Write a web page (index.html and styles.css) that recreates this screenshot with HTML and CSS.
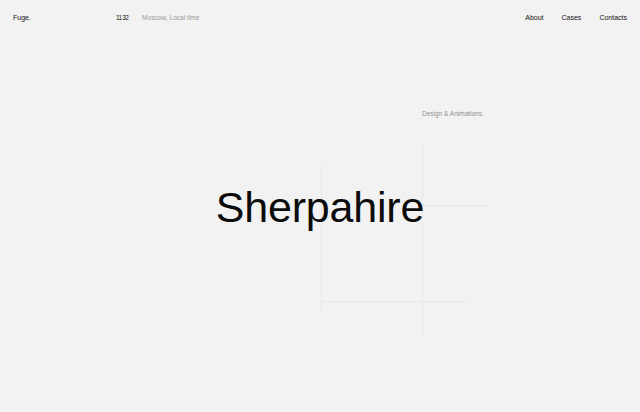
FILE: index.html
```html
<!DOCTYPE html>
<html lang="en">
<head>
<meta charset="utf-8">
<title>Fuge.</title>
<link rel="stylesheet" href="styles.css">
</head>
<body>
<div class="page">
  <header class="header">
    <div class="header-left">
      <span class="brand">Fuge.</span>
      <span class="clock">11 32</span>
      <span class="muted">Moscow, Local time</span>
    </div>
    <nav class="nav">
      <a href="#" class="nav-link">About</a>
      <a href="#" class="nav-link">Cases</a>
      <a href="#" class="nav-link">Contacts</a>
    </nav>
  </header>
  <main class="hero">
    <span class="deco deco-v1"></span>
    <span class="deco deco-v2"></span>
    <span class="deco deco-h1"></span>
    <span class="deco deco-h2"></span>
    <p class="tagline">Design &amp; Animations.</p>
    <h1 class="title">Sherpahire</h1>
  </main>
</div>
</body>
</html>
```

FILE: styles.css
```css
* { box-sizing: border-box; }
html, body {
  margin: 0;
  padding: 0;
  background: #f2f2f2;
  font-family: "Liberation Sans", Arial, sans-serif;
  color: #111;
}
.page {
  position: relative;
  height: 412px;
  overflow: hidden;
}
.header {
  display: flex;
  justify-content: space-between;
  align-items: baseline;
  padding: 14px 13px 0;
  font-size: 7px;
  line-height: 8px;
}
.header-left {
  display: flex;
  align-items: baseline;
}
.brand {
  width: 103px;
}
.clock {
  width: 26px;
  font-size: 6.4px;
  letter-spacing: -0.7px;
}
.muted {
  color: #9a9a9a;
  font-size: 6.6px;
}
.nav {
  display: flex;
  gap: 18px;
}
.nav-link {
  color: #111;
  text-decoration: none;
}
.hero {
  display: flex;
  flex-direction: column;
}
.tagline {
  position: relative;
  z-index: 1;
  margin: 88px 0 0 422px;
  font-size: 6.5px;
  line-height: 8px;
  color: #8f8f8f;
}
.title {
  position: relative;
  z-index: 1;
  margin: 68px 0 0;
  text-align: center;
  font-size: 43px;
  line-height: 43px;
  font-weight: 400;
  color: #0c0c0c;
  letter-spacing: -0.2px;
}
.deco {
  position: absolute;
  background: #e8e8e8;
  z-index: 0;
}
.deco-v1 { left: 321px; top: 165px; width: 1px; height: 147px; }
.deco-v2 { left: 422px; top: 144px; width: 1px; height: 192px; }
.deco-h1 { left: 423px; top: 205px; width: 65px; height: 1px; }
.deco-h2 { left: 320px; top: 301px; width: 147px; height: 1px; }
```
